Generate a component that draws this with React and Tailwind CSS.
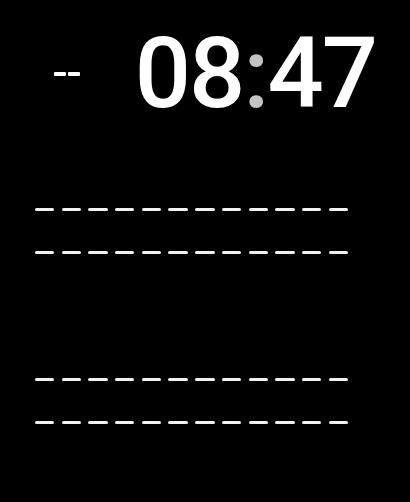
import React from "react";

const DashRow = () => (
  <div className="flex gap-[7.3px]">
    {Array.from({ length: 12 }).map((_, i) => (
      <div key={i} className="h-[3px] w-[19.4px] rounded-full bg-[#f2f2f2]" />
    ))}
  </div>
);

export default function App() {
  return (
    <div
      className="flex h-[502px] w-[410px] flex-col bg-black text-white"
      style={{ fontFamily: "Roboto, Inter, sans-serif" }}
    >
      <div className="flex h-[128px] items-center justify-between pl-[54px] pr-[34px] pt-[18px]">
        <div className="mt-[2px] flex gap-[2px]" aria-label="--">
          <div className="h-[4px] w-[12px] rounded-[1px] bg-white" />
          <div className="h-[4px] w-[12px] rounded-[1px] bg-white" />
        </div>
        <div className="text-[99px] font-medium leading-[110px] tracking-[-2px]">
          08<span className="text-[#c4c4c4]">:</span>47
        </div>
      </div>
      <div className="mt-[80px] flex flex-col gap-[40px] pl-[35px]">
        <DashRow />
        <DashRow />
      </div>
      <div className="mt-[124px] flex flex-col gap-[40px] pl-[35px]">
        <DashRow />
        <DashRow />
      </div>
    </div>
  );
}
